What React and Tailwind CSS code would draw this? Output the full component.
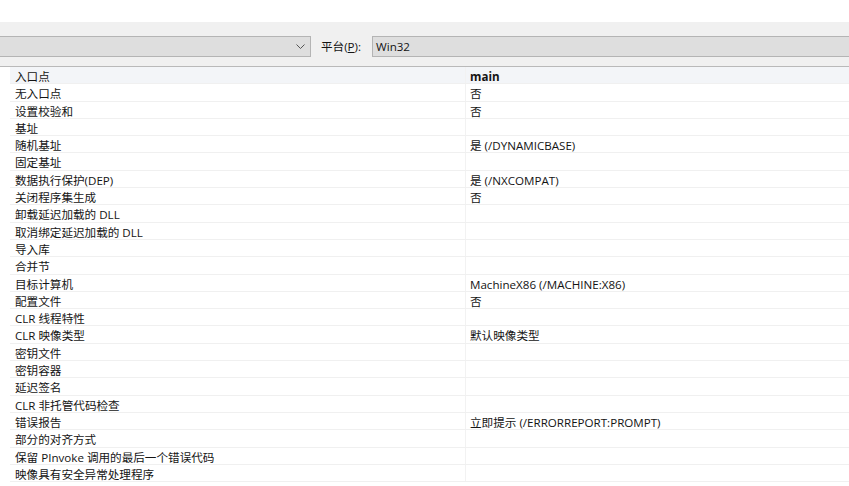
const rows = [
  ["入口点", "main", true],
  ["无入口点", "否"],
  ["设置校验和", "否"],
  ["基址", ""],
  ["随机基址", "是 (/DYNAMICBASE)"],
  ["固定基址", ""],
  ["数据执行保护(DEP)", "是 (/NXCOMPAT)"],
  ["关闭程序集生成", "否"],
  ["卸载延迟加载的 DLL", ""],
  ["取消绑定延迟加载的 DLL", ""],
  ["导入库", ""],
  ["合并节", ""],
  ["目标计算机", "MachineX86 (/MACHINE:X86)"],
  ["配置文件", "否"],
  ["CLR 线程特性", ""],
  ["CLR 映像类型", "默认映像类型"],
  ["密钥文件", ""],
  ["密钥容器", ""],
  ["延迟签名", ""],
  ["CLR 非托管代码检查", ""],
  ["错误报告", "立即提示 (/ERRORREPORT:PROMPT)"],
  ["部分的对齐方式", ""],
  ["保留 PInvoke 调用的最后一个错误代码", ""],
  ["映像具有安全异常处理程序", ""],
];

const font = { fontFamily: '"Open Sans", "Noto Sans CJK SC", "Microsoft YaHei", sans-serif' };

const PropRow = ({ name, value, bold }) => (
  <div className={`flex h-[17.3px] border-b border-[#f0f0f0] leading-[17px] ${bold ? "bg-[#f3f5f8]" : ""}`}>
    <div className="w-[455px] shrink-0 pl-[5px] whitespace-nowrap relative top-[1px]">{name}</div>
    <div className={`flex-1 pl-[4px] border-l border-[#f2f2f2] whitespace-nowrap ${bold ? "font-bold" : ""}`}>
      <span className="relative top-[1px]">{value}</span>
    </div>
  </div>
);

export default function App() {
  return (
    <div className="w-[849px] h-[486px] bg-white overflow-hidden text-[11.6px] text-[#141414]" style={font}>
      <div className="h-[22px] bg-white" />
      <div className="h-[45px] bg-[#f0f0f0] border-b border-[#b9b9b9] flex items-start pt-[14px]">
        <div className="ml-[-4px] w-[315px] h-[21px] bg-[#dedede] border border-[#b4b4b4] flex items-center justify-end pr-[5px]">
          <svg width="9" height="6" viewBox="0 0 9 6" fill="none" stroke="#555" strokeWidth="1">
            <path d="M0.5 0.5 L4.5 4.5 L8.5 0.5" />
          </svg>
        </div>
        <div className="ml-[10px] w-[51px] h-[21px] leading-[21px]">
          平台(<span className="underline">P</span>):
        </div>
        <div className="flex-1 h-[21px] leading-[19px] bg-[#dedede] border border-[#b4b4b4] border-r-0 pl-[3px]">
          Win32
        </div>
      </div>
      <div className="pl-[10px]">
        {rows.map(([name, value, bold]) => (
          <PropRow key={name} name={name} value={value} bold={bold} />
        ))}
      </div>
    </div>
  );
}
